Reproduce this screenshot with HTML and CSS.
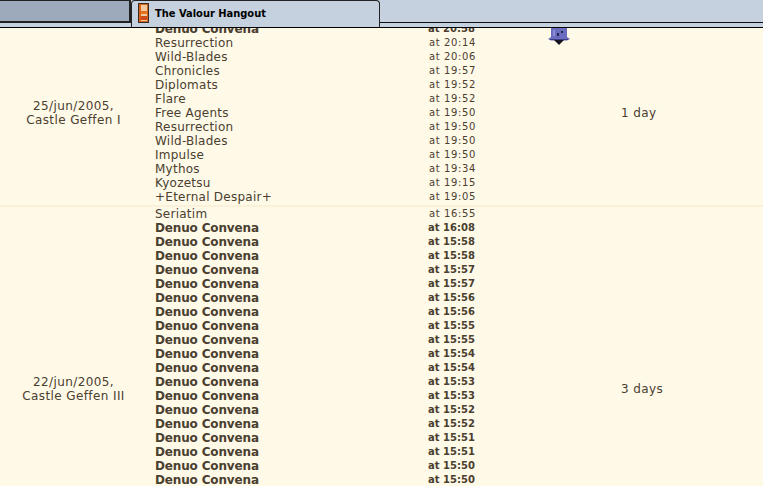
FILE: index.html
```html
<!DOCTYPE html>
<html lang="en">
<head>
<meta charset="utf-8">
<title>The Valour Hangout</title>
<link rel="stylesheet" href="styles.css">
</head>
<body>
<div class="viewport">
<header class="tabbar">
  <div class="tab tab-inactive"></div>
  <div class="tab tab-active">
    <svg class="tab-icon" width="11" height="20" viewBox="0 0 11 20"><rect x="0.5" y="0.5" width="10" height="19" fill="#d8641a" stroke="#3a2a20"/><rect x="3" y="2" width="6" height="16" fill="#f4c8a0"/><rect x="3" y="8" width="6" height="3" fill="#e8701c"/><rect x="3" y="13" width="6" height="4" fill="#cf4a14"/></svg>
    <span class="tab-title">The Valour Hangout</span>
  </div>
  <div class="tab-rest"></div>
</header>
<main class="table">
  <section class="group group-first">
    <div class="place">25/jun/2005,<br>Castle Geffen I</div>
    <ul class="rows">
      <li class="row bold"><span class="guild">Denuo Convena</span><span class="time">at 20:58</span></li>
      <li class="row"><span class="guild">Resurrection</span><span class="time">at 20:14</span></li>
      <li class="row"><span class="guild">Wild-Blades</span><span class="time">at 20:06</span></li>
      <li class="row"><span class="guild">Chronicles</span><span class="time">at 19:57</span></li>
      <li class="row"><span class="guild">Diplomats</span><span class="time">at 19:52</span></li>
      <li class="row"><span class="guild">Flare</span><span class="time">at 19:52</span></li>
      <li class="row"><span class="guild">Free Agents</span><span class="time">at 19:50</span></li>
      <li class="row"><span class="guild">Resurrection</span><span class="time">at 19:50</span></li>
      <li class="row"><span class="guild">Wild-Blades</span><span class="time">at 19:50</span></li>
      <li class="row"><span class="guild">Impulse</span><span class="time">at 19:50</span></li>
      <li class="row"><span class="guild">Mythos</span><span class="time">at 19:34</span></li>
      <li class="row"><span class="guild">Kyozetsu</span><span class="time">at 19:15</span></li>
      <li class="row"><span class="guild">+Eternal Despair+</span><span class="time">at 19:05</span></li>
    </ul>
    <div class="duration">1 day</div>
    <svg class="emblem" width="22" height="17" viewBox="0 0 22 17"><path d="M3 0H19L19 9L22 11L19 12.5H3L0 11L3 9Z" fill="#6a6cc0"/><path d="M6 12H16L11 17Z" fill="#14141e"/><rect x="9" y="5" width="2" height="3" fill="#22244a"/><rect x="13" y="3" width="2" height="2" fill="#22244a"/><rect x="5" y="2" width="2" height="6" fill="#8b8dd6"/><path d="M2 11.5H20" stroke="#3c3e80"/></svg>
  </section>
  <section class="group group-second">
    <div class="place">22/jun/2005,<br>Castle Geffen III</div>
    <ul class="rows">
      <li class="row"><span class="guild">Seriatim</span><span class="time">at 16:55</span></li>
      <li class="row bold"><span class="guild">Denuo Convena</span><span class="time">at 16:08</span></li>
      <li class="row bold"><span class="guild">Denuo Convena</span><span class="time">at 15:58</span></li>
      <li class="row bold"><span class="guild">Denuo Convena</span><span class="time">at 15:58</span></li>
      <li class="row bold"><span class="guild">Denuo Convena</span><span class="time">at 15:57</span></li>
      <li class="row bold"><span class="guild">Denuo Convena</span><span class="time">at 15:57</span></li>
      <li class="row bold"><span class="guild">Denuo Convena</span><span class="time">at 15:56</span></li>
      <li class="row bold"><span class="guild">Denuo Convena</span><span class="time">at 15:56</span></li>
      <li class="row bold"><span class="guild">Denuo Convena</span><span class="time">at 15:55</span></li>
      <li class="row bold"><span class="guild">Denuo Convena</span><span class="time">at 15:55</span></li>
      <li class="row bold"><span class="guild">Denuo Convena</span><span class="time">at 15:54</span></li>
      <li class="row bold"><span class="guild">Denuo Convena</span><span class="time">at 15:54</span></li>
      <li class="row bold"><span class="guild">Denuo Convena</span><span class="time">at 15:53</span></li>
      <li class="row bold"><span class="guild">Denuo Convena</span><span class="time">at 15:53</span></li>
      <li class="row bold"><span class="guild">Denuo Convena</span><span class="time">at 15:52</span></li>
      <li class="row bold"><span class="guild">Denuo Convena</span><span class="time">at 15:52</span></li>
      <li class="row bold"><span class="guild">Denuo Convena</span><span class="time">at 15:51</span></li>
      <li class="row bold"><span class="guild">Denuo Convena</span><span class="time">at 15:51</span></li>
      <li class="row bold"><span class="guild">Denuo Convena</span><span class="time">at 15:50</span></li>
      <li class="row bold"><span class="guild">Denuo Convena</span><span class="time">at 15:50</span></li>
    </ul>
    <div class="duration">3 days</div>
  </section>
</main>
</div>
</body>
</html>
```
FILE: styles.css
```css
* { box-sizing: border-box; }
html, body { margin: 0; padding: 0; }
body { width: 763px; height: 486px; overflow: hidden; background: #fff9e8; font-family: "DejaVu Sans", Verdana, sans-serif; color: #4a4030; }
.viewport { width: 763px; height: 486px; overflow: hidden; display: flex; flex-direction: column; }
.tabbar { height: 28px; flex: none; display: flex; background: #c5d1de; border-bottom: 1px solid #000; position: relative; z-index: 2; }
.tab { height: 23px; }
.tab-inactive { width: 131px; background: #9daabb; border: 1px solid #222; border-width: 1px 2px 2px 0; }
.tab-active { width: 249px; height: 27px; display: flex; align-items: center; gap: 6px; padding: 0 0 2px 6px; background: #c5d1de; border: 1px solid #222; border-bottom: 0; border-radius: 4px 4px 0 0; }
.tab-rest { flex: 1; height: 23px; border-bottom: 1px solid #111; }
.tab-icon { flex: none; }
.tab-title { font: bold 11px "DejaVu Sans", Verdana, sans-serif; font-stretch: condensed; color: #000; }
.table { flex: none; margin-top: -6px; }
.group { display: grid; grid-template-columns: 147px 366px 1fr; align-items: center; position: relative; }
.group-first { padding-bottom: 1px; border-bottom: 2px solid #fbf0da; }
.group-second { min-height: 363px; }
.place { text-align: center; font-size: 12px; line-height: 14px; letter-spacing: .4px; }
.rows { list-style: none; margin: 0; padding: 0 0 0 8px; align-self: start; }
.row { display: flex; height: 14px; line-height: 14px; font-size: 12px; letter-spacing: .25px; white-space: nowrap; }
.guild { width: 273px; flex: none; }
.time { font-size: 10px; letter-spacing: .6px; padding-left: 1px; }
.bold { font-weight: bold; letter-spacing: -.15px; }
.bold .time { letter-spacing: 0; padding-left: 0; }
.duration { font-size: 12px; letter-spacing: .4px; padding-left: 108px; }
.emblem { position: absolute; left: 548px; top: 6px; }
```
